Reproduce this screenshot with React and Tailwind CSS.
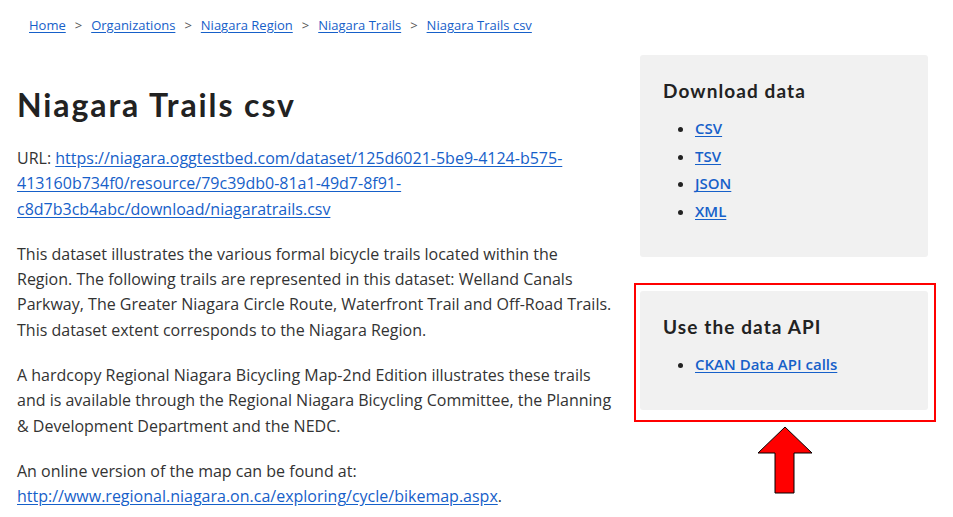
import React from "react";

const linkCls = "text-[#1660c9] underline underline-offset-2";

function Crumbs() {
  const items = ["Home", "Organizations", "Niagara Region", "Niagara Trails", "Niagara Trails csv"];
  return (
    <nav className="pl-[29px] pt-[15px] h-[44px] text-[13px] leading-[20px] text-[#333] font-['Open_Sans',sans-serif]">
      {items.map((t, i) => (
        <span key={t}>
          {i > 0 && <span className="px-[9px] text-[#555]">&gt;</span>}
          <a href="#" className={linkCls}>{t}</a>
        </span>
      ))}
    </nav>
  );
}

function Panel({ title, items, className = "" }) {
  return (
    <div className={"bg-[#f1f1f1] rounded-[3px] pl-[23px] pr-[20px] " + className}>
      <h2 className="font-['Lato',sans-serif] font-bold text-[19px] tracking-[1.1px] leading-[24px] text-[#222]">{title}</h2>
      <ul className="list-disc pl-[32px] mt-[12px] text-[15px] leading-[27.7px] font-['Open_Sans',sans-serif] font-semibold marker:text-[#222]">
        {items.map((t) => (
          <li key={t}>
            <a href="#" className={linkCls}>{t}</a>
          </li>
        ))}
      </ul>
    </div>
  );
}

export default function App() {
  return (
    <div className="w-[953px] h-[517px] bg-white overflow-hidden font-['Open_Sans',sans-serif] text-[#333]">
      <Crumbs />
      <div className="flex">
        <main className="pl-[17px] w-[634px] shrink-0 pr-[21px] text-[16px] leading-[25.3px]">
          <h1 className="font-['Lato',sans-serif] font-bold text-[32px] tracking-[1.9px] leading-[40px] text-[#222] mt-[41px] mb-[21px]">
            Niagara Trails csv
          </h1>
          <p className="mb-[20px]">
            URL:{" "}
            <a href="#" className={linkCls}>
              https://niagara.oggtestbed.com/dataset/125d6021-5be9-4124-b575-413160b734f0/resource/79c39db0-81a1-49d7-8f91-c8d7b3cb4abc/download/niagaratrails.csv
            </a>
          </p>
          <p className="mb-[20px]">
            This dataset illustrates the various formal bicycle trails located within the Region. The following trails are represented in this dataset: Welland Canals Parkway, The Greater Niagara Circle Route, Waterfront Trail and Off-Road Trails. This dataset extent corresponds to the Niagara Region.
          </p>
          <p className="mb-[20px]">
            A hardcopy Regional Niagara Bicycling Map-2nd Edition illustrates these trails and is available through the Regional Niagara Bicycling Committee, the Planning &amp; Development Department and the NEDC.
          </p>
          <p>
            An online version of the map can be found at:{" "}
            <a href="#" className={linkCls}>http://www.regional.niagara.on.ca/exploring/cycle/bikemap.aspx</a>.
          </p>
        </main>
        <aside className="w-[302px] shrink-0 flex flex-col">
          <div className="pl-[6px] pr-[8px] pt-[11px]">
            <Panel title="Download data" items={["CSV", "TSV", "JSON", "XML"]} className="pt-[24px] pb-[31px]" />
          </div>
          <div className="mt-[26px] border-2 border-[#ff0000] pl-[4px] pr-[6px] pt-[6px] pb-[10px]">
            <Panel title="Use the data API" items={["CKAN Data API calls"]} className="pt-[24px] pb-[31px]" />
          </div>
          <div className="flex justify-center mt-[4px]">
            <svg width="56" height="69" viewBox="0 0 56 69">
              <polygon
                points="28,1 55,27 37,27 37,67 18,67 18,27 1,27"
                fill="#ff0000"
                stroke="#000"
                strokeWidth="1"
              />
            </svg>
          </div>
        </aside>
      </div>
    </div>
  );
}
